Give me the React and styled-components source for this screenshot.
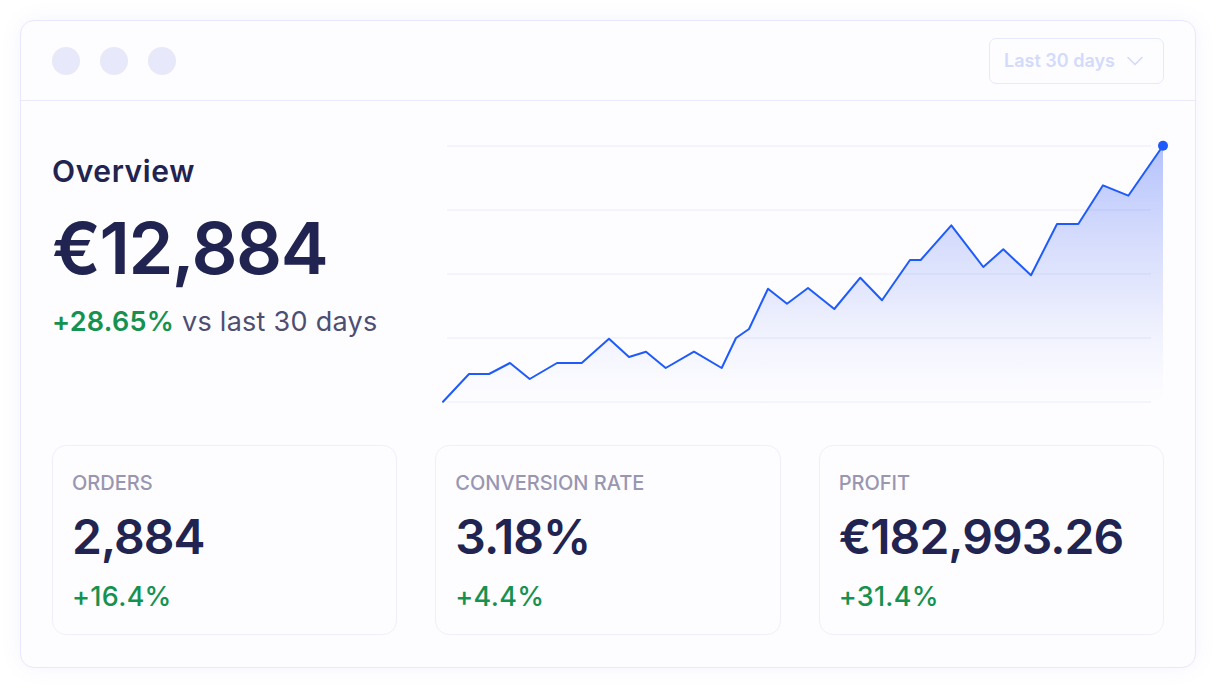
import React from 'react';
import styled, { createGlobalStyle } from 'styled-components';
import { ChevronDown } from 'lucide-react';

const GlobalStyle = createGlobalStyle`
  * {
    box-sizing: border-box;
  }

  body {
    margin: 0;
    background: #ffffff;
    font-family: Inter, "Noto Sans", "Liberation Sans", sans-serif;
    -webkit-font-smoothing: antialiased;
  }
`;

const Page = styled.div`
  padding: 20px;
`;

const Window = styled.div`
  width: 1176px;
  height: 648px;
  background: #fdfdff;
  border: 1.5px solid #e7e8fc;
  border-radius: 14px;
  box-shadow: 0 0 22px rgba(104, 110, 240, 0.07);
  display: flex;
  flex-direction: column;
  overflow: hidden;
`;

const TitleBar = styled.div`
  height: 80px;
  flex-shrink: 0;
  display: flex;
  align-items: center;
  justify-content: space-between;
  padding: 0 31px 0 31px;
  border-bottom: 1.5px solid #e9eafc;
`;

const Dots = styled.div`
  display: flex;
  gap: 20px;
`;

const Dot = styled.span`
  width: 28px;
  height: 28px;
  border-radius: 50%;
  background: #e7e9fb;
`;

const RangeButton = styled.button`
  width: 175px;
  height: 46px;
  display: flex;
  align-items: center;
  gap: 6px;
  padding: 0 0 0 14px;
  background: transparent;
  border: 1.5px solid #e6e8fc;
  border-radius: 7px;
  font-family: inherit;
  font-size: 18px;
  font-weight: 600;
  color: #d3dafc;
`;

const Body = styled.div`
  padding: 40px 31px 30px 31px;
  display: flex;
  flex-direction: column;
  gap: 40px;
`;

const TopRow = styled.div`
  display: grid;
  grid-template-columns: 391px 720px;
  height: 264px;
`;

const Summary = styled.div`
  padding-top: 12px;
  display: flex;
  flex-direction: column;
`;

const Heading = styled.h2`
  margin: 0;
  font-size: 30px;
  line-height: 36px;
  font-weight: 600;
  letter-spacing: 0.02em;
  color: #22244f;
`;

const Total = styled.div`
  margin-top: 23px;
  font-size: 72px;
  line-height: 72px;
  font-weight: 600;
  letter-spacing: -0.02em;
  color: #212350;
`;

const Trend = styled.div`
  margin-top: 22px;
  font-size: 27px;
  line-height: 32px;
  letter-spacing: 0.01em;
  color: #4d4e72;
`;

const Up = styled.span`
  color: #15924f;
  font-weight: ${({ $bold }) => ($bold ? 600 : 500)};
`;

const Chart = styled.svg`
  display: block;
  overflow: visible;
`;

const Stats = styled.div`
  display: grid;
  grid-template-columns: repeat(3, 1fr);
  gap: 38px;
`;

const Card = styled.div`
  height: 190px;
  padding: 25px 19px 0;
  border: 1.5px solid #efeffc;
  border-radius: 14px;
  display: flex;
  flex-direction: column;
`;

const Label = styled.div`
  font-size: 20px;
  line-height: 24px;
  font-weight: 500;
  color: #9896b1;
`;

const Value = styled.div`
  margin-top: 14px;
  font-size: 48px;
  line-height: 56px;
  font-weight: 600;
  letter-spacing: -0.02em;
  color: #212350;
`;

const Change = styled.div`
  margin-top: 16px;
  font-size: 27px;
  line-height: 32px;
  letter-spacing: 0.01em;
`;

const revenue = [
  [0, 260.7], [26, 233], [46, 233], [67, 222], [86.7, 238], [114, 222],
  [138.7, 222], [166, 197.7], [186, 216], [203, 210.7], [222.7, 227],
  [251, 210.7], [278.7, 227], [293, 197], [306, 188], [325, 147.7],
  [344, 162.7], [365, 147], [391.3, 168], [417.3, 136.7], [439, 159.3],
  [467, 119], [477.7, 119], [508.3, 84.3], [540.3, 126], [560.3, 108.3],
  [588, 134.3], [614, 83], [635.3, 83], [660, 44.3], [685.3, 54.7],
  [720, 4.7],
];

const gridLines = [5, 69, 133, 197, 261];

const stats = [
  { label: 'ORDERS', value: '2,884', change: '+16.4%' },
  { label: 'CONVERSION RATE', value: '3.18%', change: '+4.4%' },
  { label: 'PROFIT', value: '€182,993.26', change: '+31.4%' },
];

const RevenueChart = () => {
  const line = revenue.map(([x, y]) => `${x},${y}`).join(' ');
  const area = `${line} 720,261 0,261`;
  const [lastX, lastY] = revenue[revenue.length - 1];

  return (
    <Chart width="720" height="264" viewBox="0 0 720 264">
      <defs>
        <linearGradient id="areaFill" x1="0" y1="5" x2="0" y2="261" gradientUnits="userSpaceOnUse">
          <stop offset="0" stopColor="#3d63f7" stopOpacity="0.38" />
          <stop offset="0.55" stopColor="#6b80f4" stopOpacity="0.18" />
          <stop offset="1" stopColor="#a7b2f6" stopOpacity="0" />
        </linearGradient>
      </defs>
      {gridLines.map((y) => (
        <line key={y} x1="4" x2="708" y1={y} y2={y} stroke="#eff0fd" strokeWidth="1.5" />
      ))}
      <polygon points={area} fill="url(#areaFill)" />
      <polyline
        points={line}
        fill="none"
        stroke="#1f5bfa"
        strokeWidth="2"
        strokeLinejoin="round"
        strokeLinecap="round"
      />
      <circle cx={lastX} cy={lastY} r="5" fill="#1f5bfa" />
    </Chart>
  );
};

const App = () => (
  <>
    <GlobalStyle />
    <Page>
      <Window>
        <TitleBar>
          <Dots>
            <Dot />
            <Dot />
            <Dot />
          </Dots>
          <RangeButton>
            Last 30 days
            <ChevronDown size={28} strokeWidth={1.4} />
          </RangeButton>
        </TitleBar>

        <Body>
          <TopRow>
            <Summary>
              <Heading>Overview</Heading>
              <Total>€12,884</Total>
              <Trend>
                <Up $bold>+28.65%</Up> vs last 30 days
              </Trend>
            </Summary>
            <RevenueChart />
          </TopRow>

          <Stats>
            {stats.map((s) => (
              <Card key={s.label}>
                <Label>{s.label}</Label>
                <Value>{s.value}</Value>
                <Change>
                  <Up>{s.change}</Up>
                </Change>
              </Card>
            ))}
          </Stats>
        </Body>
      </Window>
    </Page>
  </>
);

export default App;
